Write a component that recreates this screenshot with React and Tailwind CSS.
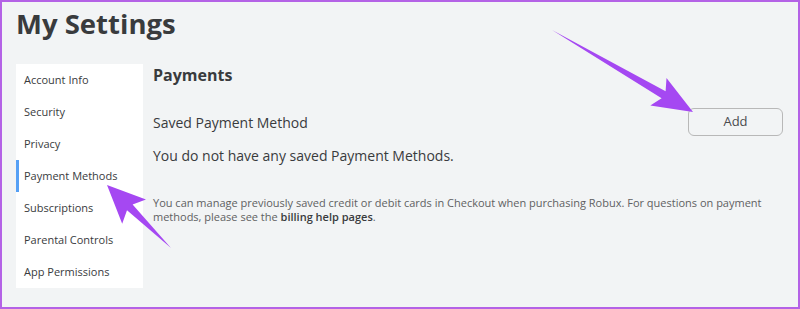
export default function App() {
  const tabs = [
    "Account Info",
    "Security",
    "Privacy",
    "Payment Methods",
    "Subscriptions",
    "Parental Controls",
    "App Permissions",
  ];

  return (
    <div
      className="relative w-[800px] h-[309px] box-border border-2 border-[#b462e6] bg-[#f2f4f5] overflow-hidden text-[#393b3d]"
      style={{ fontFamily: '"Open Sans", "Liberation Sans", sans-serif' }}
    >
      {/* Header */}
      <h1 className="pl-[14px] pt-[4px] h-[62px] text-[27.5px] font-bold leading-[36px]">
        My Settings
      </h1>

      <div className="flex">
        {/* Side menu */}
        <nav className="ml-[14px] w-[127px] bg-white flex flex-col">
          {tabs.map((tab) =>
            tab === "Payment Methods" ? (
              <div
                key={tab}
                className="h-8 flex items-center pl-[5px] text-[11px] font-medium border-l-[3px] border-[#55a0f5]"
              >
                {tab}
              </div>
            ) : (
              <div key={tab} className="h-8 flex items-center pl-2 text-[11px] font-medium">
                {tab}
              </div>
            )
          )}
        </nav>

        {/* Payments panel */}
        <main className="flex-1 ml-[10px] pr-[15px]">
          <h2 className="mt-[1px] h-5 leading-5 text-base font-bold">Payments</h2>

          <div className="mt-[23px] flex items-center justify-between">
            <span className="text-[14px] font-medium">Saved Payment Method</span>
            <button className="w-[95px] h-7 rounded-md border border-[#b8b8b8] text-[13px] font-medium text-[#4a4b4d]">
              Add
            </button>
          </div>

          <p className="mt-[10px] leading-5 text-[14px]">
            You do not have any saved Payment Methods.
          </p>

          <p className="mt-[30px] text-[11px] leading-[14px] text-[#606162]">
            You can manage previously saved credit or debit cards in Checkout when purchasing Robux. For questions on payment
            <br />
            methods, please see the <span className="font-semibold text-[#393b3d]">billing help pages</span>.
          </p>
        </main>
      </div>

      {/* Annotation arrows */}
      <svg
        className="absolute left-0 top-0 pointer-events-none"
        width="800"
        height="309"
        viewBox="2 2 800 309"
      >
        <polygon
          fill="#a548f2"
          points="693,112 650.3,105.6 661.6,98.3 552,30 665.6,91.3 666.5,78"
        />
        <polygon
          fill="#a548f2"
          points="107,185 146,199.5 132.6,204.5 171,248 127,210.3 122.2,223.7"
        />
      </svg>
    </div>
  );
}
